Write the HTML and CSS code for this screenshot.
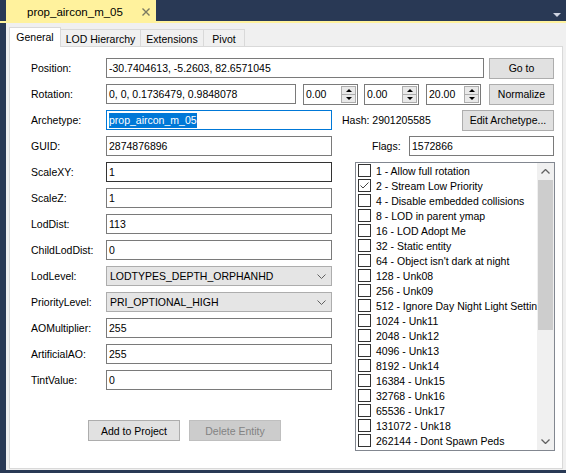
FILE: index.html
```html
<!DOCTYPE html>
<html lang="en">
<head>
    <meta charset="UTF-8">
    <title>prop_aircon_m_05</title>
    <link rel="stylesheet" href="styles.css">
</head>
<body>
    <div class="doc-bar">
        <div class="doc-tab">
            <span class="doc-title">prop_aircon_m_05</span>
            <svg class="doc-close" width="8" height="8" viewBox="0 0 8 8"><path d="M0.5 0.5 L7.5 7.5 M7.5 0.5 L0.5 7.5" stroke="#7b7a62" stroke-width="1.4"/></svg>
        </div>
        <span class="doc-menu"></span>
    </div>
    <div class="doc-line"></div>

    <div class="window">
        <div class="tabs">
            <div class="tab tab-general active">General</div>
            <div class="tab tab-lod">LOD Hierarchy</div>
            <div class="tab tab-ext">Extensions</div>
            <div class="tab tab-pivot">Pivot</div>
        </div>

        <div class="page">
            <div class="row">
                <span class="lbl">Position:</span>
                <div class="field w-pos">-30.7404613, -5.2603, 82.6571045</div>
                <button class="btn btn-small gap-5">Go to</button>
            </div>
            <div class="row">
                <span class="lbl">Rotation:</span>
                <div class="field w-rot">0, 0, 0.1736479, 0.9848078</div>
                <div class="spin gap-7"><span class="spin-val">0.00</span><span class="spin-btns"><span class="up"></span><span class="down"></span></span></div>
                <div class="spin gap-6"><span class="spin-val">0.00</span><span class="spin-btns"><span class="up"></span><span class="down"></span></span></div>
                <div class="spin gap-7"><span class="spin-val">20.00</span><span class="spin-btns"><span class="up"></span><span class="down"></span></span></div>
                <button class="btn btn-small gap-8">Normalize</button>
            </div>
            <div class="row">
                <span class="lbl">Archetype:</span>
                <div class="field w-half focused"><span class="sel">prop_aircon_m_05</span></div>
                <span class="hash">Hash: 2901205585</span>
                <button class="btn btn-wide push">Edit Archetype...</button>
            </div>
            <div class="row">
                <span class="lbl">GUID:</span>
                <div class="field w-half">2874876896</div>
                <span class="flags-lbl">Flags:</span>
                <div class="field w-flags push">1572866</div>
            </div>

            <div class="lower">
                <div class="left-col">
                    <div class="row">
                        <span class="lbl">ScaleXY:</span>
                        <div class="field w-half hover">1</div>
                    </div>
                    <div class="row">
                        <span class="lbl">ScaleZ:</span>
                        <div class="field w-half">1</div>
                    </div>
                    <div class="row">
                        <span class="lbl">LodDist:</span>
                        <div class="field w-half">113</div>
                    </div>
                    <div class="row">
                        <span class="lbl">ChildLodDist:</span>
                        <div class="field w-half">0</div>
                    </div>
                    <div class="row">
                        <span class="lbl">LodLevel:</span>
                        <div class="combo w-half">LODTYPES_DEPTH_ORPHANHD<svg class="chev" width="9" height="5" viewBox="0 0 9 5"><path d="M0.5 0.5 L4.5 4.5 L8.5 0.5" fill="none" stroke="#606060"/></svg></div>
                    </div>
                    <div class="row">
                        <span class="lbl">PriorityLevel:</span>
                        <div class="combo w-half">PRI_OPTIONAL_HIGH<svg class="chev" width="9" height="5" viewBox="0 0 9 5"><path d="M0.5 0.5 L4.5 4.5 L8.5 0.5" fill="none" stroke="#606060"/></svg></div>
                    </div>
                    <div class="row">
                        <span class="lbl">AOMultiplier:</span>
                        <div class="field w-half">255</div>
                    </div>
                    <div class="row">
                        <span class="lbl">ArtificialAO:</span>
                        <div class="field w-half">255</div>
                    </div>
                    <div class="row">
                        <span class="lbl">TintValue:</span>
                        <div class="field w-half">0</div>
                    </div>
                    <div class="actions">
                        <button class="btn btn-action">Add to Project</button>
                        <button class="btn btn-action disabled">Delete Entity</button>
                    </div>
                </div>

                <div class="flaglist">
                    <div class="items">
                        <div class="item"><span class="cb"></span>1 - Allow full rotation</div>
                        <div class="item"><span class="cb"><svg width="11" height="11" viewBox="0 0 11 11"><path d="M1.5 5.5 L4 8 L9.5 2.5" fill="none" stroke="#444" stroke-width="1"/></svg></span>2 - Stream Low Priority</div>
                        <div class="item"><span class="cb"></span>4 - Disable embedded collisions</div>
                        <div class="item"><span class="cb"></span>8 - LOD in parent ymap</div>
                        <div class="item"><span class="cb"></span>16 - LOD Adopt Me</div>
                        <div class="item"><span class="cb"></span>32 - Static entity</div>
                        <div class="item"><span class="cb"></span>64 - Object isn't dark at night</div>
                        <div class="item"><span class="cb"></span>128 - Unk08</div>
                        <div class="item"><span class="cb"></span>256 - Unk09</div>
                        <div class="item"><span class="cb"></span>512 - Ignore Day Night Light Settings</div>
                        <div class="item"><span class="cb"></span>1024 - Unk11</div>
                        <div class="item"><span class="cb"></span>2048 - Unk12</div>
                        <div class="item"><span class="cb"></span>4096 - Unk13</div>
                        <div class="item"><span class="cb"></span>8192 - Unk14</div>
                        <div class="item"><span class="cb"></span>16384 - Unk15</div>
                        <div class="item"><span class="cb"></span>32768 - Unk16</div>
                        <div class="item"><span class="cb"></span>65536 - Unk17</div>
                        <div class="item"><span class="cb"></span>131072 - Unk18</div>
                        <div class="item"><span class="cb"></span>262144 - Dont Spawn Peds</div>
                    </div>
                    <div class="scrollbar">
                        <div class="arrow"><svg width="9" height="5" viewBox="0 0 9 5"><path d="M0.5 4.5 L4.5 0.5 L8.5 4.5" fill="none" stroke="#606060" stroke-width="1.3"/></svg></div>
                        <div class="thumb"></div>
                        <div class="arrow push-down"><svg width="9" height="5" viewBox="0 0 9 5"><path d="M0.5 0.5 L4.5 4.5 L8.5 0.5" fill="none" stroke="#606060" stroke-width="1.3"/></svg></div>
                    </div>
                </div>
            </div>
        </div>
    </div>
</body>
</html>
```

FILE: styles.css
```css
html, body {
    margin: 0;
    padding: 0;
}

body {
    width: 566px;
    height: 473px;
    overflow: hidden;
    background-color: #293955;
    font-family: "Liberation Sans", Arial, sans-serif;
    font-size: 10.5px;
    color: #000;
}

/* document tab strip */
.doc-bar {
    height: 21px;
    display: flex;
    padding-left: 6px;
}

.doc-tab {
    width: 150px;
    height: 21px;
    background-color: #fff29d;
    display: flex;
    align-items: center;
    box-sizing: border-box;
    padding-left: 21px;
    padding-right: 6px;
}

.doc-title {
    font-size: 11.5px;
    padding-top: 2px;
}

.doc-close {
    margin-left: auto;
    margin-top: 2px;
}

.doc-menu {
    margin-left: auto;
    margin-right: 5px;
    margin-top: 13px;
    width: 0;
    height: 0;
    border-left: 4px solid transparent;
    border-right: 4px solid transparent;
    border-top: 4px solid #ced4e2;
}

.doc-line {
    height: 2px;
    background-color: #fff29d;
}

/* window and tab control */
.window {
    margin-left: 6px;
    height: 447px;
    background-color: #f0f0f0;
    padding: 4px 3px 1px 3px;
    box-sizing: border-box;
}

.tabs {
    display: flex;
    align-items: flex-end;
    height: 19px;
}

.tab {
    height: 17px;
    box-sizing: border-box;
    border: 1px solid #d9d9d9;
    border-bottom: none;
    margin-left: -1px;
    background-color: #f0f0f0;
    text-align: center;
    padding-top: 3px;
}

.tab.active {
    height: 20px;
    margin-bottom: -1px;
    margin-left: 0;
    background-color: #fff;
    position: relative;
    padding-top: 3px;
}

.tab-general { width: 52px; }
.tab-lod { width: 81px; }
.tab-ext { width: 64px; }
.tab-pivot { width: 42px; }

.page {
    height: 423px;
    box-sizing: border-box;
    background-color: #fff;
    border: 1px solid #d9d9d9;
    padding: 11px 8px 0 21px;
}

/* rows */
.row {
    display: flex;
    align-items: center;
    height: 20px;
    margin-bottom: 6px;
}

.lbl {
    width: 75px;
    flex: none;
}

.field {
    height: 20px;
    box-sizing: border-box;
    border: 1px solid #7a7a7a;
    background-color: #fff;
    padding: 0 2px;
    display: flex;
    align-items: center;
    white-space: nowrap;
    overflow: hidden;
    flex: none;
}

.field.focused { border-color: #0078d7; }
.field.hover { border-color: #333; }

.sel {
    background-color: #0078d7;
    color: #fff;
    line-height: 15px;
}

.w-pos { width: 378px; }
.w-rot { width: 190px; }
.w-half { width: 226px; }
.w-flags { width: 145px; }

.gap-5 { margin-left: 5px; }
.gap-6 { margin-left: 6px; }
.gap-7 { margin-left: 7px; }
.gap-8 { margin-left: 8px; }
.push { margin-left: auto; }

.hash {
    margin-left: 10px;
}

.flags-lbl {
    margin-left: 40px;
}

/* numeric up-down */
.spin {
    width: 55px;
    height: 21px;
    box-sizing: border-box;
    border: 1px solid #7a7a7a;
    display: flex;
    padding: 1px;
}

.spin-val {
    flex: 1;
    display: flex;
    align-items: center;
    padding-left: 1px;
}

.spin-btns {
    width: 15px;
    display: flex;
    flex-direction: column;
}

.spin-btns span {
    flex: 1;
    border: 1px solid #adadad;
    background-color: #e9e9e9;
    display: flex;
    align-items: center;
    justify-content: center;
}

.spin-btns .down { border-top: none; }

.spin-btns .up::after {
    content: "";
    border-left: 3px solid transparent;
    border-right: 3px solid transparent;
    border-bottom: 3px solid #000;
}

.spin-btns .down::after {
    content: "";
    border-left: 3px solid transparent;
    border-right: 3px solid transparent;
    border-top: 3px solid #000;
}

/* buttons */
.btn {
    height: 21px;
    box-sizing: border-box;
    border: 1px solid #adadad;
    background-color: #e1e1e1;
    font-family: inherit;
    font-size: 10.5px;
    color: #000;
    padding: 0;
    flex: none;
}

.btn-small { width: 65px; }
.btn-wide { width: 92px; }
.btn-action { width: 92px; }

.btn.disabled {
    background-color: #cccccc;
    border-color: #bfbfbf;
    color: #838383;
}

/* combos */
.combo {
    height: 20px;
    box-sizing: border-box;
    border: 1px solid #adadad;
    background-color: #e5e5e5;
    display: flex;
    align-items: center;
    padding: 0 5px 0 3px;
    flex: none;
}

.chev {
    margin-left: auto;
}

/* lower area */
.lower {
    display: flex;
}

.left-col {
    width: 301px;
    flex: none;
}

.actions {
    display: flex;
    gap: 9px;
    margin-top: 30px;
    padding-left: 57px;
}

/* checked list */
.flaglist {
    margin-left: 23px;
    width: 200px;
    height: 289px;
    box-sizing: border-box;
    border: 1px solid #828790;
    display: flex;
    background-color: #fff;
}

.items {
    flex: 1;
    overflow: hidden;
}

.item {
    height: 15px;
    display: flex;
    align-items: center;
    white-space: nowrap;
}

.cb {
    width: 13px;
    height: 13px;
    box-sizing: border-box;
    border: 1px solid #333;
    margin-left: 2px;
    margin-right: 5px;
    flex: none;
    display: flex;
    align-items: center;
    justify-content: center;
}

.scrollbar {
    width: 17px;
    flex: none;
    background-color: #f0f0f0;
    display: flex;
    flex-direction: column;
    align-items: center;
}

.arrow {
    height: 17px;
    width: 17px;
    display: flex;
    align-items: center;
    justify-content: center;
}

.push-down { margin-top: auto; }

.thumb {
    width: 15px;
    height: 150px;
    background-color: #cdcdcd;
}
```
